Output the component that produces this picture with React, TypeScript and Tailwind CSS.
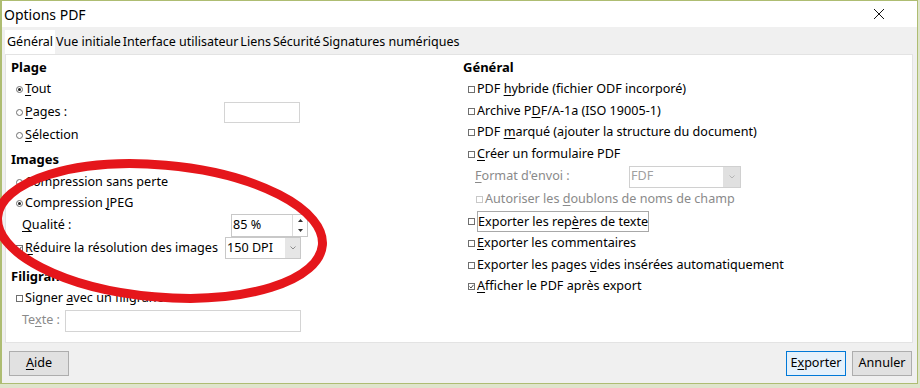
import React from "react";

const U = ({ children }: { children: React.ReactNode }) => (
  <span className="underline underline-offset-2 decoration-1">{children}</span>
);

const Radio = ({ on }: { on?: boolean }) => (
  <span className="w-[7px] h-[7px] rounded-full border border-[#6f6f6f] bg-white flex items-center justify-center mr-[2px] shrink-0">
    {on && <span className="w-[3px] h-[3px] rounded-full bg-[#222]" />}
  </span>
);

const Check = ({ on, dim }: { on?: boolean; dim?: boolean }) => (
  <span
    className={
      "w-[7px] h-[7px] border bg-white flex items-center justify-center mr-[2px] shrink-0 " +
      (dim ? "border-[#c8c8c8]" : "border-[#6f6f6f]")
    }
  >
    {on && (
      <svg width="5" height="5" viewBox="0 0 5 5">
        <path d="M0.5 2.5 L2 4 L4.5 0.8" fill="none" stroke="#333" strokeWidth="0.9" />
      </svg>
    )}
  </span>
);

export default function App() {
  return (
    <div
      className="relative w-[920px] h-[388px] bg-[#dfe4cc] overflow-hidden text-[12.6px] text-black whitespace-nowrap"
      style={{ fontFamily: '"Noto Sans", "Open Sans", sans-serif' }}
    >
      <div className="absolute left-0 top-0 w-[918px] h-[384px] border border-[#aebd72] border-l-2 bg-[#f0f0f0] flex flex-col">
        {/* title bar */}
        <div className="h-[26px] bg-white flex items-center justify-between pl-[2px] pr-[32px] shrink-0">
          <span className="text-[14px]">Options PDF</span>
          <svg width="12" height="12" viewBox="0 0 12 12">
            <path d="M1 1 L11 11 M11 1 L1 11" stroke="#111" strokeWidth="1" />
          </svg>
        </div>
        {/* tabs */}
        <div className="h-[27px] flex items-end pl-[3px] shrink-0">
          <div className="flex items-center h-[24px] text-[12.5px]">
            <span className="bg-white h-full flex items-center px-[2px]">Général</span>
            <span className="px-[1px]">Vue initiale</span>
            <span className="px-[1px]">Interface utilisateur</span>
            <span className="px-[1px]">Liens</span>
            <span className="px-[1px]">Sécurité</span>
            <span className="px-[1px]">Signatures numériques</span>
          </div>
        </div>
        {/* content */}
        <div className="ml-[3px] mr-[4px] h-[289px] bg-white border border-[#e3e3e3] flex shrink-0">
          {/* left column */}
          <div className="w-[452px] pl-[5px] pt-[2px] flex flex-col">
            <div className="h-[22px] flex items-center font-bold text-[13px]">Plage</div>
            <div className="h-[21px] flex items-center pl-[5px]">
              <Radio on />
              <span><U>T</U>out</span>
            </div>
            <div className="h-[24px] flex items-center pl-[5px]">
              <Radio />
              <span className="w-[199px]"><U>P</U>ages :</span>
              <span className="w-[76px] h-[21px] border border-[#d4d4d4] bg-white" />
            </div>
            <div className="h-[22px] flex items-center pl-[5px]">
              <Radio />
              <span><U>S</U>élection</span>
            </div>
            <div className="mt-[3px] h-[22px] flex items-center font-bold text-[13px]">Images</div>
            <div className="h-[22px] flex items-center pl-[5px]">
              <Radio />
              <span>Compression sans perte</span>
            </div>
            <div className="h-[21px] flex items-center pl-[5px]">
              <Radio on />
              <span>Compression <U>J</U>PEG</span>
            </div>
            <div className="h-[23px] flex items-center pl-[11px]">
              <span className="w-[209px]"><U>Q</U>ualité :</span>
              <span className="w-[77px] h-[23px] border border-[#c8c8c8] bg-white flex">
                <span className="flex-1 flex items-center pl-[1px]">85 %</span>
                <span className="w-[15px] flex flex-col border-l border-[#dcdcdc]">
                  <span className="flex-1 flex items-center justify-center">
                    <svg width="5" height="3" viewBox="0 0 5 3"><path d="M0 3 L2.5 0 L5 3Z" fill="#333" /></svg>
                  </span>
                  <span className="flex-1 flex items-center justify-center">
                    <svg width="5" height="3" viewBox="0 0 5 3"><path d="M0 0 L2.5 3 L5 0Z" fill="#333" /></svg>
                  </span>
                </span>
              </span>
            </div>
            <div className="h-[22px] flex items-center pl-[5px]">
              <Check on />
              <span className="w-[200px]"><U>R</U>éduire la résolution des images</span>
              <span className="w-[76px] h-[22px] border border-[#c8c8c8] bg-white flex">
                <span className="flex-1 flex items-center pl-[1px]">150 DPI</span>
                <span className="w-[15px] bg-[#e6e6e6] flex items-center justify-center">
                  <svg width="6" height="4" viewBox="0 0 6 4"><path d="M0.5 0.5 L3 3 L5.5 0.5" fill="none" stroke="#777" strokeWidth="0.8" /></svg>
                </span>
              </span>
            </div>
            <div className="mt-[7px] h-[22px] flex items-center font-bold text-[13px]">Filigrane</div>
            <div className="h-[20px] flex items-center pl-[5px]">
              <Check />
              <span>Signer <U>a</U>vec un filigrane</span>
            </div>
            <div className="mt-[1px] h-[23px] flex items-center pl-[11px]">
              <span className="w-[43px] text-[#8a8a8a]">Te<U>x</U>te :</span>
              <span className="w-[236px] h-[22px] border border-[#d4d4d4] bg-white" />
            </div>
          </div>
          {/* right column */}
          <div className="flex-1 pl-[5px] pt-[2px] flex flex-col">
            <div className="h-[22px] flex items-center font-bold text-[13px]">Général</div>
            <div className="h-[21px] flex items-center pl-[5px]">
              <Check />
              <span>PDF <U>h</U>ybride (fichier ODF incorporé)</span>
            </div>
            <div className="h-[22px] flex items-center pl-[5px]">
              <Check />
              <span>Archive P<U>D</U>F/A-1a (ISO 19005-1)</span>
            </div>
            <div className="h-[21px] flex items-center pl-[5px]">
              <Check />
              <span>PDF <U>m</U>arqué (ajouter la structure du document)</span>
            </div>
            <div className="h-[22px] flex items-center pl-[5px]">
              <Check />
              <span><U>C</U>réer un formulaire PDF</span>
            </div>
            <div className="h-[23px] flex items-center pl-[12px] text-[#8a8a8a]">
              <span className="w-[154px]"><U>F</U>ormat d'envoi :</span>
              <span className="w-[112px] h-[22px] border border-[#d0d0d0] flex">
                <span className="flex-1 flex items-center pl-[1px] text-[#a0a0a0]">FDF</span>
                <span className="w-[17px] bg-[#e0e0e0] flex items-center justify-center">
                  <svg width="6" height="4" viewBox="0 0 6 4"><path d="M0.5 0.5 L3 3 L5.5 0.5" fill="none" stroke="#aaa" strokeWidth="0.8" /></svg>
                </span>
              </span>
            </div>
            <div className="h-[23px] flex items-center pl-[13px] text-[#8a8a8a]">
              <Check dim />
              <span>Autoriser les <U>d</U>oublons de noms de champ</span>
            </div>
            <div className="h-[21px] flex items-center pl-[5px]">
              <Check />
              <span className="border border-[#a8a8a8] leading-[19px]">Exporter les rep<U>è</U>res de texte</span>
            </div>
            <div className="h-[22px] flex items-center pl-[5px]">
              <Check />
              <span><U>E</U>xporter les commentaires</span>
            </div>
            <div className="h-[22px] flex items-center pl-[5px]">
              <Check />
              <span>Exporter les pages <U>v</U>ides insérées automatiquement</span>
            </div>
            <div className="h-[21px] flex items-center pl-[5px]">
              <Check on />
              <span><U>A</U>fficher le PDF après export</span>
            </div>
          </div>
        </div>
        {/* buttons */}
        <div className="flex-1 flex items-center justify-between pl-[7px] pr-[5px]">
          <span className="w-[60px] h-[25px] bg-[#e1e1e1] border border-[#adadad] flex items-center justify-center"><U>A</U>ide</span>
          <div className="flex gap-[6px]">
            <span className="w-[60px] h-[25px] bg-[#e5f1fb] border border-[#0078d7] flex items-center justify-center">E<U>x</U>porter</span>
            <span className="w-[60px] h-[25px] bg-[#e1e1e1] border border-[#adadad] flex items-center justify-center">Annuler</span>
          </div>
        </div>
      </div>
      {/* red annotation ellipse */}
      <svg className="absolute left-0 top-0 pointer-events-none" width="920" height="388">
        <ellipse cx="160" cy="231" rx="163" ry="66" transform="rotate(5 160 231)" fill="none" stroke="#e5161b" strokeWidth="9" />
      </svg>
    </div>
  );
}
